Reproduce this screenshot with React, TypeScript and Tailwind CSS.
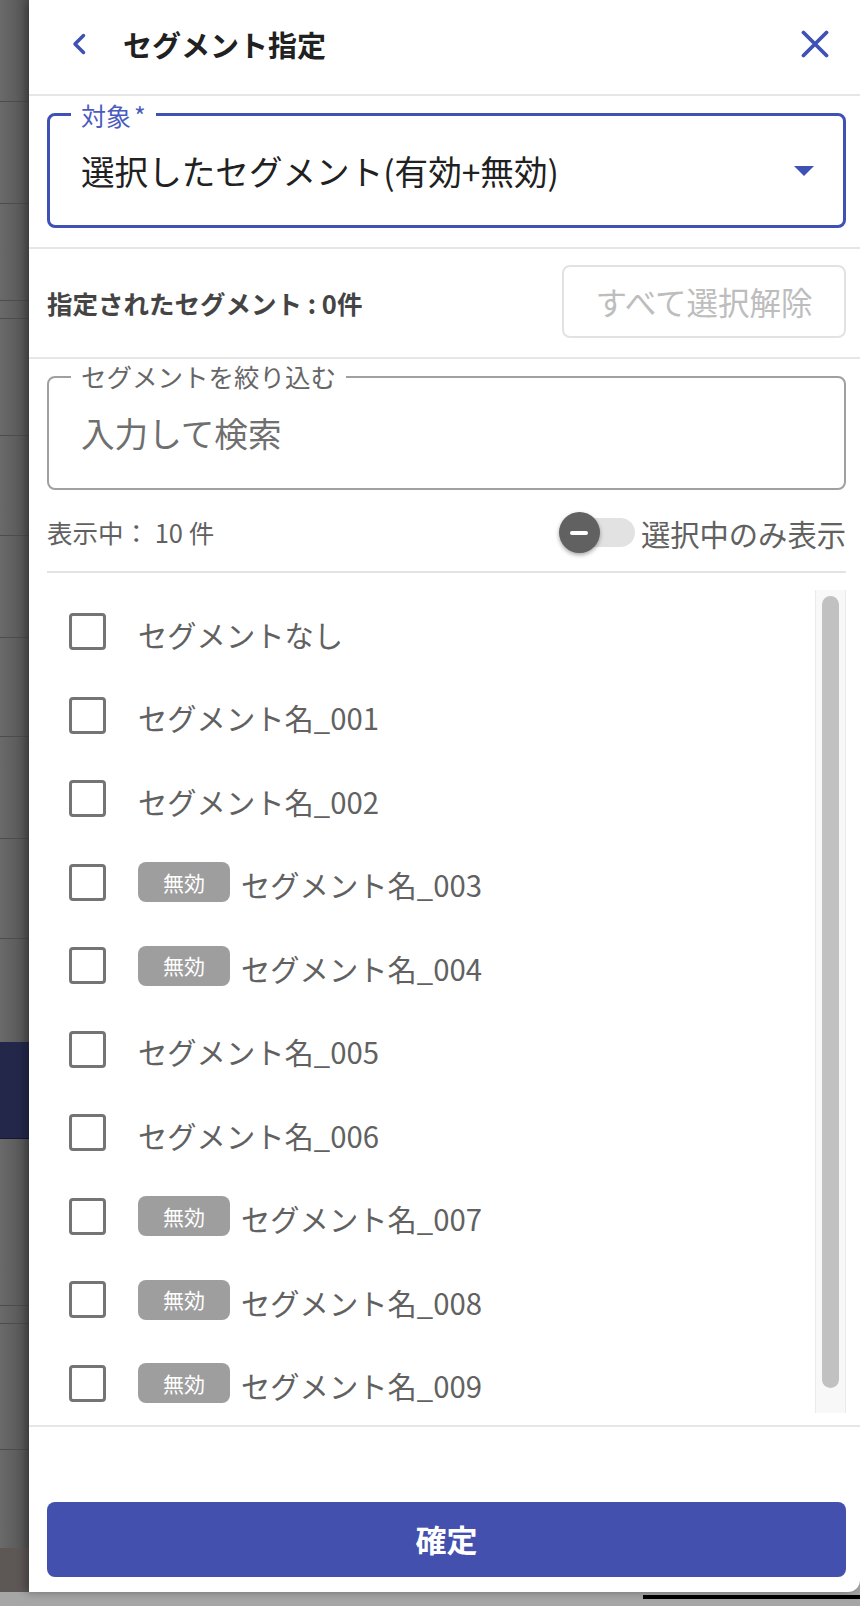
import React from "react";

const segments = [
  "h-[102px] border-b border-[#4c4c4c]",
  "h-[102px] border-b border-[#4c4c4c]",
  "h-[97px] border-b border-[#4c4c4c]",
  "h-[18px] border-b border-[#4c4c4c]",
  "h-[117px] border-b border-[#4c4c4c]",
  "h-[100px] border-b border-[#4c4c4c]",
  "h-[102px] border-b border-[#4c4c4c]",
  "h-[99px] border-b border-[#4c4c4c]",
  "h-[102px] border-b border-[#4c4c4c]",
  "h-[100px] border-b border-[#4c4c4c]",
  "h-[103px]",
  "h-[97px] bg-[#23284a] border-b border-[#15182e]",
  "h-[167px] border-b border-[#4c4c4c]",
  "h-[18px] border-b border-[#4c4c4c]",
  "h-[126px] border-b border-[#4c4c4c]",
  "h-[98px]",
  "h-[44px] bg-[#5d5755]",
];

const items = [
  { name: "セグメントなし", disabled: false },
  { name: "セグメント名_001", disabled: false },
  { name: "セグメント名_002", disabled: false },
  { name: "セグメント名_003", disabled: true },
  { name: "セグメント名_004", disabled: true },
  { name: "セグメント名_005", disabled: false },
  { name: "セグメント名_006", disabled: false },
  { name: "セグメント名_007", disabled: true },
  { name: "セグメント名_008", disabled: true },
  { name: "セグメント名_009", disabled: true },
];

function SegmentRow({ name, disabled }: { name: string; disabled: boolean }) {
  return (
    <div className="flex h-[83.5px] shrink-0 items-center pl-[22px]">
      <span className="h-[37px] w-[37px] shrink-0 rounded-[4px] border-[3.5px] border-[#747474]" />
      <div className="ml-[32px] flex items-center">
        {disabled && (
          <span className="mr-[11px] flex h-[40px] w-[92px] items-center justify-center rounded-[8px] bg-[#9e9e9e] text-[21px] text-white">
            無効
          </span>
        )}
        <span className="pt-[4px] text-[29.3px] leading-[36px] text-[#616161]">{name}</span>
      </div>
    </div>
  );
}

export default function App() {
  return (
    <div className="flex h-[1606px] w-[860px] flex-col overflow-hidden bg-[#a6a6a6] font-['Noto_Sans_CJK_JP',sans-serif]">
      <div className="flex h-[1592px] shrink-0">
        {/* dimmed page behind the drawer */}
        <div className="flex w-[29px] shrink-0 flex-col bg-linear-to-r from-[#6a6a6a] to-[#535353]">
          {segments.map((c, i) => (
            <div key={i} className={c} />
          ))}
        </div>

        <div className="flex flex-1 flex-col rounded-br-[12px] bg-white shadow-[-3px_0_10px_rgba(0,0,0,0.35)]">
          {/* header */}
          <div className="flex h-[96px] shrink-0 items-center border-b-2 border-[#e6e6e6] pb-[6px]">
            <svg className="ml-[42px] h-[22px] w-[16px]" viewBox="0 0 16 22" fill="none">
              <path d="M12.5 2.5 L4 11 L12.5 19.5" stroke="#3f51b5" strokeWidth="3.5" strokeLinecap="round" strokeLinejoin="round" />
            </svg>
            <h1 className="ml-[36px] text-[29px] font-bold leading-[36px] text-[#212121]">セグメント指定</h1>
            <svg className="ml-auto mr-[31px] h-[28px] w-[28px]" viewBox="0 0 28 28" fill="none">
              <path d="M2.5 2.5 L25.5 25.5 M25.5 2.5 L2.5 25.5" stroke="#3f51b5" strokeWidth="3.8" strokeLinecap="round" />
            </svg>
          </div>

          {/* target select */}
          <div className="shrink-0 border-b-2 border-[#e6e6e6] pb-[19px] pl-[18px] pr-[14px] pt-[17px]">
            <div className="relative flex h-[115px] items-center rounded-[8px] border-[3px] border-[#3f51b5] pl-[31px]">
              <span className="absolute -top-[16px] left-[21px] bg-white px-[10px] text-[25px] leading-[30px] text-[#4b5cbf]">
                対象<span className="ml-[3px]">*</span>
              </span>
              <span className="text-[33.6px] leading-[40px] text-[#212121]">選択したセグメント(有効+無効)</span>
              <svg className="ml-auto mr-[29px] h-[10px] w-[20px]" viewBox="0 0 20 10">
                <polygon points="0,0 20,0 10,10" fill="#3f51b5" />
              </svg>
            </div>
          </div>

          {/* selected count */}
          <div className="flex shrink-0 items-center justify-between border-b-2 border-[#e6e6e6] pb-[19px] pl-[18px] pr-[14px] pt-[16px]">
            <span className="pt-[3px] text-[25.5px] font-bold text-[#444444]">指定されたセグメント : 0件</span>
            <button className="flex h-[73px] w-[284px] items-center justify-center rounded-[8px] border-2 border-[#e2e2e2] text-[31.5px] text-[#bdbdbd]">
              すべて選択解除
            </button>
          </div>

          {/* filter */}
          <div className="flex shrink-0 flex-col pl-[18px] pr-[14px] pt-[17px]">
            <div className="relative flex h-[114px] items-center rounded-[8px] border-2 border-[#a0a0a0] pl-[32px]">
              <span className="absolute -top-[17px] left-[22px] bg-white px-[10px] text-[25.5px] leading-[30px] text-[#666666]">
                セグメントを絞り込む
              </span>
              <span className="text-[33.6px] leading-[40px] text-[#6f6f6f]">入力して検索</span>
            </div>

            <div className="flex h-[83px] items-center justify-between border-b-2 border-[#e3e3e3] pt-[4px]">
              <span className="text-[25.5px] text-[#616161]">表示中： 10 件</span>
              <div className="flex items-center">
                <div className="relative flex h-[41px] w-[76px] items-center">
                  <span className="ml-[6px] h-[29px] w-[70px] rounded-full bg-[#e2e2e2]" />
                  <span className="absolute left-0 top-0 flex h-[41px] w-[41px] items-center justify-center rounded-full bg-[#616161] shadow-[0_2px_4px_rgba(0,0,0,0.35)]">
                    <span className="h-[4px] w-[18px] rounded-full bg-white" />
                  </span>
                </div>
                <span className="ml-[6px] text-[29.3px] leading-[36px] text-[#616161]">選択中のみ表示</span>
              </div>
            </div>

            {/* list */}
            <div className="mt-[17px] flex h-[823px] overflow-hidden">
              <div className="flex flex-1 flex-col">
                {items.map((it) => (
                  <SegmentRow key={it.name} name={it.name} disabled={it.disabled} />
                ))}
              </div>
              <div className="flex w-[31px] shrink-0 justify-center border-x border-[#ebebeb] bg-[#f8f8f8] pt-[6px]">
                <span className="h-[792px] w-[17px] rounded-full bg-[#c1c1c1]" />
              </div>
            </div>
          </div>

          {/* footer */}
          <div className="mt-[12px] flex flex-1 flex-col border-t-2 border-[#e6e6e6] pb-[15px] pl-[18px] pr-[14px]">
            <button className="mt-auto flex h-[75px] w-full items-center justify-center rounded-[8px] bg-[#4350ae] text-[31px] font-bold text-white">
              確定
            </button>
          </div>
        </div>
      </div>
      <div className="h-[14px] shrink-0 pl-[643px] pt-[3px]">
        <div className="h-[4px] bg-black" />
      </div>
    </div>
  );
}
